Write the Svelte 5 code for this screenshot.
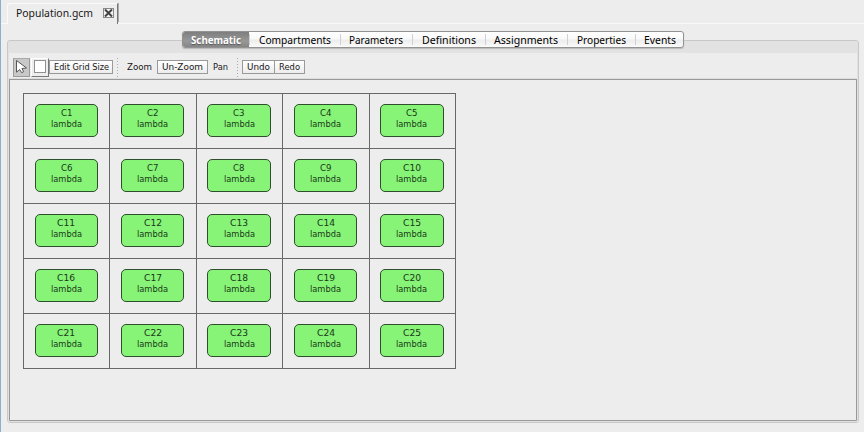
<script>
  const tabs = [
    { label: 'Schematic', width: 66, text: 50 },
    { label: 'Compartments', width: 91, text: 72 },
    { label: 'Parameters', width: 72, text: 54 },
    { label: 'Definitions', width: 73, text: 54 },
    { label: 'Assignments', width: 82, text: 64 },
    { label: 'Properties', width: 68, text: 49 },
    { label: 'Events', width: 49, text: 32 }
  ];
  const cells = Array.from({ length: 25 }, (_, i) => `C${i + 1}`);
</script>

{#snippet label(text, width, size, weight = 400)}
  <svg class="label" class:small={size < 10} {width} height="14" viewBox="0 0 {width} 14">
    <text x="0" y="11" font-size={size} font-weight={weight} textLength={width} lengthAdjust="spacingAndGlyphs">{text}</text>
  </svg>
{/snippet}

<div class="window">
  <header class="files">
    <div class="file-tab">
      {@render label('Population.gcm', 77, 11)}
      <svg class="close" width="11" height="10" viewBox="0 0 11 10">
        <rect x=".5" y=".5" width="10" height="9" fill="#f5f5f5" stroke="#888" />
        <path d="M2 1.5 9 8.5M9 1.5 2 8.5" stroke="#444" stroke-width="2" />
      </svg>
    </div>
    <div class="rest"></div>
  </header>

  <main class="pane">
    <nav class="tabs">
      {#each tabs as tab, i}
        <button class:active={i === 0} style:width="{tab.width}px">
          {@render label(tab.label, tab.text, 10.8, i ? 450 : 700)}
        </button>
      {/each}
    </nav>
    <div class="band"></div>
    <div class="toolbar">
      <button class="tool selected" aria-label="Select">
        <svg width="17" height="18" viewBox="0 0 17 18">
          <path d="M3.5 2.5v11.7l3.2-2.7 2 3.2 2-1.1-1.8-3.1 4.6-.5Z" fill="#fff" stroke="#555" />
        </svg>
      </button>
      <button class="tool square" aria-label="Compartment">
        <svg width="17" height="18" viewBox="0 0 17 18">
          <rect x="2.5" y="2.5" width="11" height="12" fill="#fff" stroke="#909090" />
        </svg>
      </button>
      <button class="btn edit">{@render label('Edit Grid Size', 55, 8.7)}</button>
      <i class="dots"></i>
      <span class="zoom">{@render label('Zoom', 25, 8.7)}</span>
      <button class="btn unzoom">{@render label('Un-Zoom', 41, 8.7)}</button>
      <span class="pan">{@render label('Pan', 15, 8.7)}</span>
      <i class="dots second"></i>
      <button class="btn undo">{@render label('Undo', 23, 8.7)}</button>
      <button class="btn redo">{@render label('Redo', 21, 8.7)}</button>
    </div>
    <section class="canvas">
      <div class="grid">
        {#each cells as cell}
          <div class="cell">
            <div class="node">
              {@render label(cell, cell.length > 2 ? 18 : 11.5, 8.7)}
              {@render label('lambda', 31, 8.7)}
            </div>
          </div>
        {/each}
      </div>
    </section>
  </main>
</div>

<style>
  :global(body) { overflow: hidden; }
  * { box-sizing: border-box; }
  .window {
    width: 864px;
    height: 432px;
    background: #ededed;
    border-left: 1px solid #8fadd2;
    font-family: "Noto Sans", "Open Sans", sans-serif;
    color: #181818;
  }
  button { margin: 0; padding: 0; border: 0; background: none; font: inherit; color: inherit; }
  .label { display: block; flex: none; overflow: visible; }
  .label text { fill: currentColor; }
  .small { font-family: "DejaVu Sans", "Noto Sans", sans-serif; }
  .files { display: flex; height: 24px; padding-top: 3px; border-bottom: 1px solid #f9f9f9; }
  .file-tab {
    display: flex;
    width: 111px;
    height: 21px;
    margin-left: 6px;
    padding: 2px 0 0 8px;
    background: #ededed;
    border-top: 1px solid #fafafa;
    border-left: 1px solid #fafafa;
    border-right: 1px solid #777;
    border-radius: 3px 0 0;
  }
  .close { margin: 2px 0 0 10px; }
  .rest { width: 1px; height: 19px; background: #aaa; }
  .pane {
    width: 852px;
    height: 383px;
    margin: 16px 0 0 6px;
    border: 1px solid #c8c8c8;
    outline: 1px solid #e1e1e1;
    outline-offset: -2px;
    border-radius: 3px;
    padding-left: 1px;
    background: linear-gradient(#e2e2e2 12px, #ededed 12px);
  }
  .tabs {
    position: relative;
    display: flex;
    width: 502px;
    height: 17px;
    margin: -10px 0 0 173px;
    border: 1px solid #929292;
    border-radius: 3px;
    background: linear-gradient(#fff, #f9f9f9 45%, #ededed 55%, #fafafa);
    box-shadow: 0 1px 1px #bbb;
    color: #000;
  }
  .tabs button { position: relative; display: flex; justify-content: center; flex: none; }
  .tabs button + button::before {
    content: "";
    position: absolute;
    left: 0;
    top: 2px;
    width: 1px;
    height: 11px;
    background: #d0d0d0;
  }
  .tabs .active {
    color: #fff;
    background: linear-gradient(#7e7e7e, #989898 60%, #858585);
    border-radius: 2px 0 0 2px;
    text-shadow: 0 1px 1px #555;
  }
  .tabs .label { margin-top: 0.5px; }
  .band { height: 6px; }
  .toolbar { display: flex; align-items: center; height: 25px; padding: 1px 0 0 4px; }
  .tool {
    width: 17px;
    height: 19px;
    margin-right: 1px;
    border-right: 1px solid #777;
    border-bottom: 1px solid #777;
    border-top: 1px solid #fff;
    border-left: 1px solid #fff;
  }
  .square { width: 18px; margin-right: 0; }
  .tool svg { display: block; margin: -1px; }
  .square svg { margin-left: 0; }
  .selected { background: #c8c8c8; border-color: #999; border-top-color: #aaa; }
  .btn {
    display: flex;
    justify-content: center;
    height: 14px;
    border: 1px solid #9a9a9a;
    background: linear-gradient(#fff, #ededed);
  }
  .btn .label, .btn :global(.label) { margin-top: -2px; }
  .edit { width: 64px; }
  .dots { width: 1px; height: 19px; margin-left: 4px; background: repeating-linear-gradient(#aaa 0 1px, transparent 1px 3px); }
  .zoom { margin: -2px 0 0 9px; }
  .unzoom { width: 51px; margin-left: 5px; }
  .pan { margin: -2px 0 0 5px; }
  .second { margin-left: 9px; }
  .undo { width: 33px; margin-left: 4px; }
  .redo { width: 31px; margin-left: -1px; }
  .canvas {
    width: 848px;
    height: 342px;
    padding: 13px;
    border: 1px solid #999;
    box-shadow: 0 0 0 1px #dedede;
  }
  .grid {
    display: grid;
    grid-template-columns: repeat(5, 86.4px);
    grid-auto-rows: 55px;
    width: 433px;
    height: 276px;
    border-right: 1px solid #686868;
    border-bottom: 1px solid #686868;
  }
  .cell { padding: 10px 10px 10px 10.6px; border-left: 1px solid #686868; border-top: 1px solid #686868; }
  .node {
    display: flex;
    flex-direction: column;
    align-items: center;
    width: 63.5px;
    height: 33px;
    border: 1px solid #2d4f2b;
    border-radius: 5px;
    background: #87f478;
    color: #193816;
  }
  .node .label + .label, .node :global(.label + .label) { margin-top: -3px; }
</style>
